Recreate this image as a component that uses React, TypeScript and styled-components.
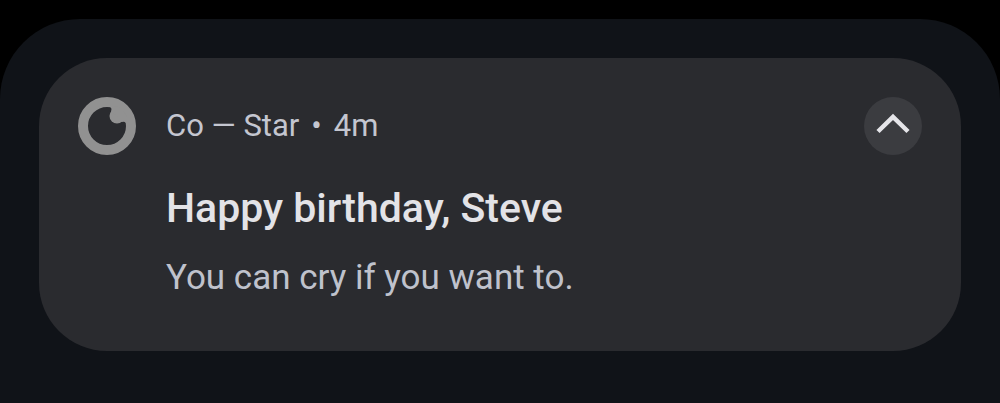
import React, { useState } from 'react';
import styled, { createGlobalStyle } from 'styled-components';

const GlobalStyle = createGlobalStyle`
  * { box-sizing: border-box; }
  html, body, #root { height: 100%; }
  body { margin: 0; background: #000; font-family: Roboto, "Noto Sans", sans-serif; }
`;

const Screen = styled.div`
  min-height: 100%;
  display: flex;
  flex-direction: column;
  padding-top: 19px;
`;

const Shade = styled.main`
  flex: 1;
  padding: 39px;
  background: #101318;
  border-radius: 80px 80px 0 0;
`;

const Card = styled.article`
  display: flex;
  align-items: flex-start;
  gap: 30px;
  padding: 39px;
  background: #2a2b2f;
  border-radius: 68px;
`;

const AppIcon = styled.svg`
  flex: none;
  width: 58px;
  height: 58px;
`;

const Content = styled.div`
  flex: 1;
  min-width: 0;
  padding-bottom: 10px;
`;

const Meta = styled.p`
  display: flex;
  gap: 12px;
  margin: 0;
  font-size: 31px;
  line-height: 58px;
  color: #c4c6d0;
`;

const Title = styled.h1`
  margin: 27px 0 0;
  font-size: 41px;
  font-weight: 500;
  line-height: 52px;
  color: #e3e3e7;
`;

const Message = styled.p`
  margin: 20px 0 0;
  font-size: 35px;
  line-height: 48px;
  color: #bfc2cc;
`;

const Toggle = styled.button`
  flex: none;
  width: 58px;
  height: 58px;
  padding: 0;
  border: 0;
  border-radius: 50%;
  background: #3b3c40;
  color: #e5e5e9;
  cursor: pointer;
`;

const Chevron = styled.svg<{ $up: boolean }>`
  display: block;
  transform: rotate(${p => (p.$up ? 0 : 180)}deg);
`;

export default function App() {
  const [open, setOpen] = useState(true);
  return (
    <>
      <GlobalStyle />
      <Screen>
        <Shade>
          <Card>
            <AppIcon viewBox="0 0 58 58" aria-hidden="true">
              <circle cx="29" cy="29" r="24" fill="none" stroke="#919191" strokeWidth="10" />
              <circle cx="39" cy="19" r="7.5" fill="#919191" />
              <path d="M31 9.5Q34.500 10.500 33 14.500L39 19 44 25Q46 24 48 26L49 19 40 9Z" fill="#919191" />
            </AppIcon>
            <Content>
              <Meta>
                <span>Co — Star</span>
                <span>•</span>
                <time dateTime="PT4M">4m</time>
              </Meta>
              <Title>Happy birthday, Steve</Title>
              {open && <Message>You can cry if you want to.</Message>}
            </Content>
            <Toggle
              type="button"
              aria-label={open ? 'Collapse' : 'Expand'}
              aria-expanded={open}
              onClick={() => setOpen(!open)}
            >
              <Chevron $up={open} viewBox="0 0 58 58" width="58" height="58" aria-hidden="true">
                <path d="M14 34.500 29 20 44 34.500" fill="none" stroke="currentColor" strokeWidth="4.500" />
              </Chevron>
            </Toggle>
          </Card>
        </Shade>
      </Screen>
    </>
  );
}
